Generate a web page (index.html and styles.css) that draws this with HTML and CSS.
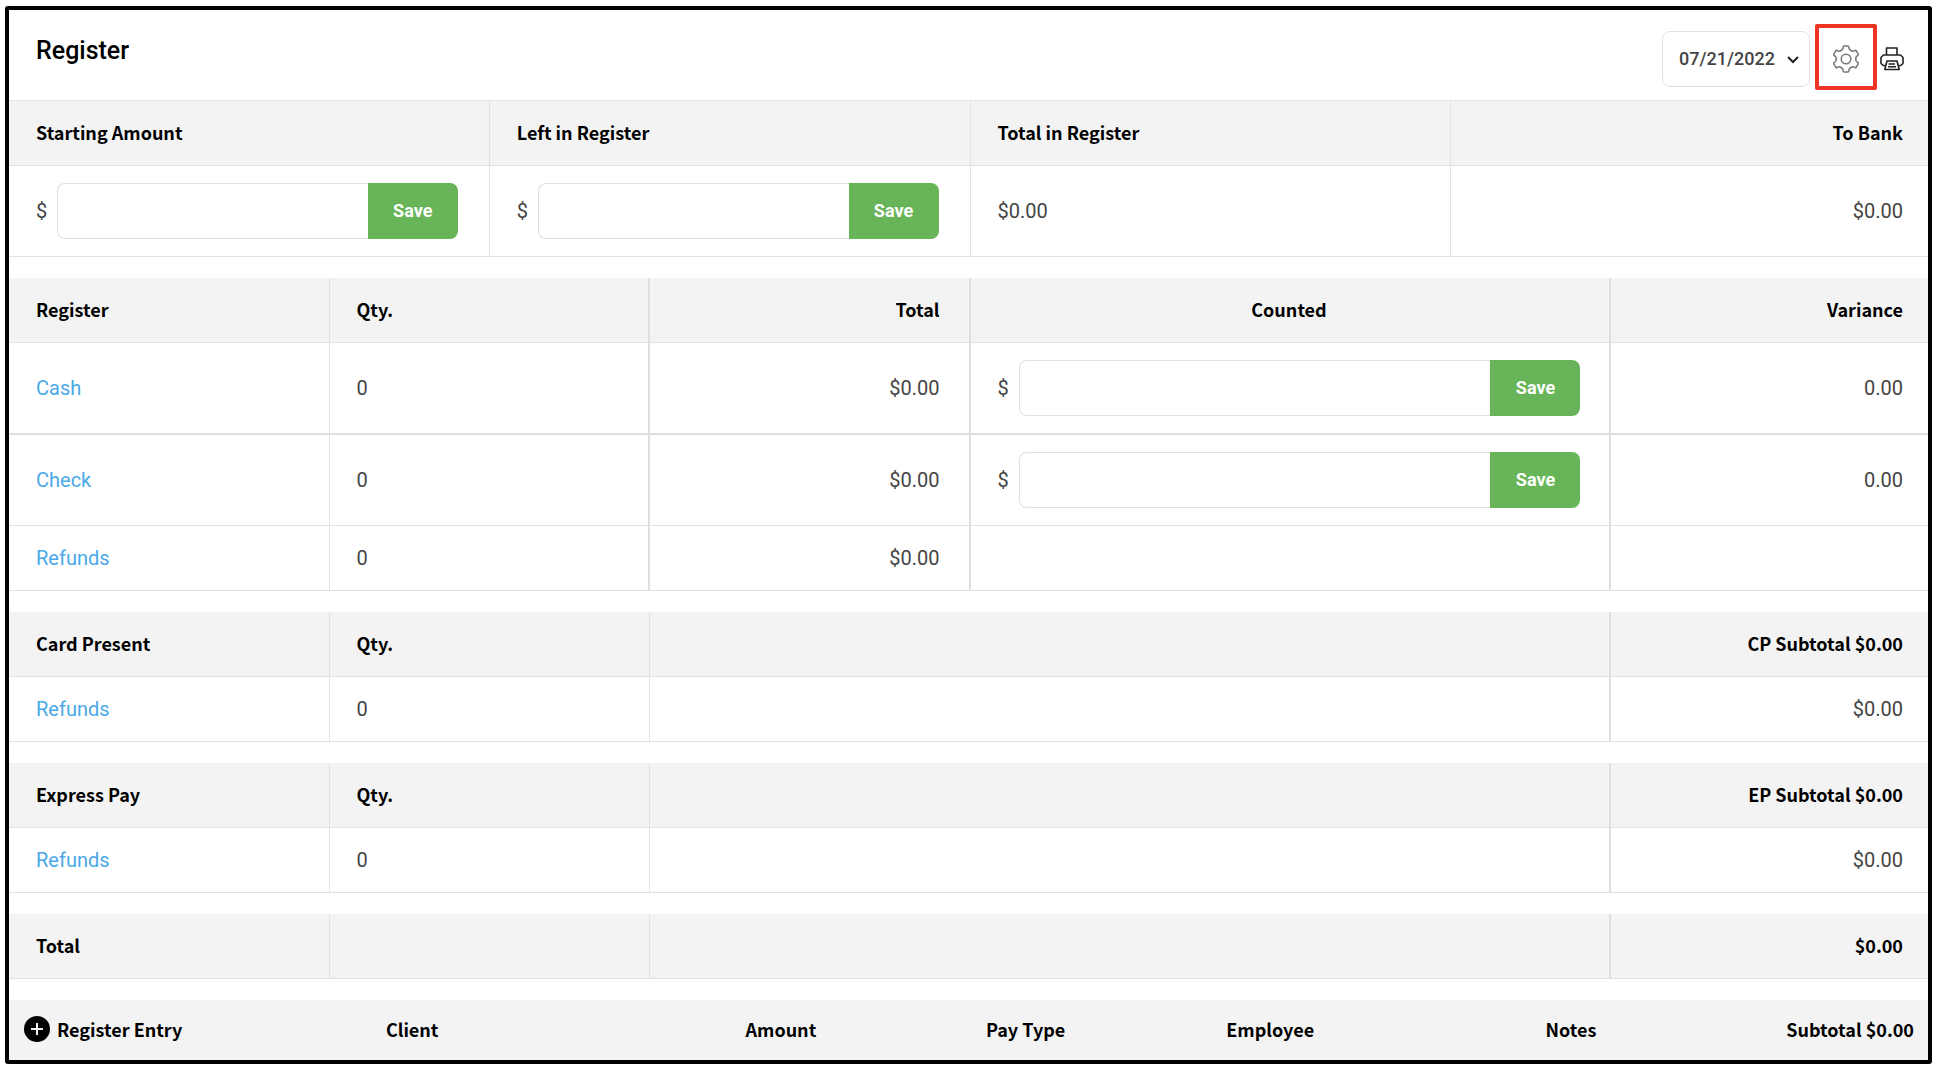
FILE: index.html
```
<!DOCTYPE html>
<html lang="en">
<head>
    <meta charset="UTF-8">
    <meta name="viewport" content="width=device-width, initial-scale=1.0">
    <title>Register</title>
    <link rel="stylesheet" href="styles.css">
</head>
<body>
    <main class="register">
        <header class="page-header">
            <h1>Register</h1>
            <div class="tools">
                <div class="date-picker">
                    <select aria-label="Date">
                        <option>07/21/2022</option>
                    </select>
                    <svg class="chevron" viewBox="0 0 12 8" fill="none" stroke="currentColor" stroke-width="2">
                        <path d="M1 1l5 5 5-5"></path>
                    </svg>
                </div>
                <button type="button" class="settings-btn" aria-label="Settings">
                    <svg viewBox="0 0 28 28" fill="none" stroke="currentColor" stroke-width="1.5" stroke-linecap="round">
                        <path id="tooth" d="M9.1 5.500Q10.800 4.900 11 3.200L11.100 2Q11.200 1 12.200 1H15.800Q16.800 1 16.900 2L17 3.200Q17.200 4.900 18.900 5.500"></path>
                        <use href="#tooth" transform="rotate(60 14 14)"></use>
                        <use href="#tooth" transform="rotate(120 14 14)"></use>
                        <use href="#tooth" transform="rotate(180 14 14)"></use>
                        <use href="#tooth" transform="rotate(240 14 14)"></use>
                        <use href="#tooth" transform="rotate(300 14 14)"></use>
                        <circle cx="14" cy="14" r="4.8"></circle>
                    </svg>
                </button>
                <button type="button" class="print-btn" aria-label="Print">
                    <svg viewBox="0 0 24 24" fill="none" stroke="currentColor" stroke-width="1.6" stroke-linejoin="round">
                        <path d="M6.500 8V1h10.500v7"></path>
                        <path d="M5 18.500H3.200L1 16.500V10.500L3.500 8h17L23 10.500v6l-2.200 2H19"></path>
                        <path d="M7 14h10l2.200 8.500H4.800z"></path>
                        <path d="M8.500 17h6.500M8 19.700h8"></path>
                    </svg>
                </button>
            </div>
        </header>

        <table>
            <thead>
                <tr>
                    <th>Starting Amount</th>
                    <th>Left in Register</th>
                    <th>Total in Register</th>
                    <th class="right">To Bank</th>
                </tr>
            </thead>
            <tbody>
                <tr class="tall">
                    <td class="entry">
                        <form class="amount-form">
                            <label for="starting-amount">$</label>
                            <input type="text" id="starting-amount">
                            <button type="button">Save</button>
                        </form>
                    </td>
                    <td class="entry">
                        <form class="amount-form">
                            <label for="left-amount">$</label>
                            <input type="text" id="left-amount">
                            <button type="button">Save</button>
                        </form>
                    </td>
                    <td>$0.00</td>
                    <td class="right">$0.00</td>
                </tr>
            </tbody>
        </table>

        <table>
            <colgroup>
                <col class="sixth"><col class="sixth"><col class="sixth"><col class="third"><col class="sixth">
            </colgroup>
            <thead>
                <tr>
                    <th>Register</th>
                    <th class="divider">Qty.</th>
                    <th class="right divider">Total</th>
                    <th class="center divider">Counted</th>
                    <th class="right">Variance</th>
                </tr>
            </thead>
            <tbody>
                <tr class="tall strong-line">
                    <td><a href="#cash">Cash</a></td>
                    <td class="divider">0</td>
                    <td class="right divider">$0.00</td>
                    <td class="divider">
                        <form class="amount-form">
                            <label for="cash-counted">$</label>
                            <input type="text" id="cash-counted">
                            <button type="button">Save</button>
                        </form>
                    </td>
                    <td class="right">0.00</td>
                </tr>
                <tr class="tall">
                    <td><a href="#check">Check</a></td>
                    <td class="divider">0</td>
                    <td class="right divider">$0.00</td>
                    <td class="divider">
                        <form class="amount-form">
                            <label for="check-counted">$</label>
                            <input type="text" id="check-counted">
                            <button type="button">Save</button>
                        </form>
                    </td>
                    <td class="right">0.00</td>
                </tr>
                <tr>
                    <td><a href="#refunds">Refunds</a></td>
                    <td class="divider">0</td>
                    <td class="right divider">$0.00</td>
                    <td class="divider"></td>
                    <td></td>
                </tr>
            </tbody>
        </table>

        <table>
            <colgroup>
                <col class="sixth"><col class="sixth"><col class="half"><col class="sixth">
            </colgroup>
            <thead>
                <tr>
                    <th>Card Present</th>
                    <th>Qty.</th>
                    <th class="divider"></th>
                    <th class="right">CP Subtotal $0.00</th>
                </tr>
            </thead>
            <tbody>
                <tr>
                    <td><a href="#card-refunds">Refunds</a></td>
                    <td>0</td>
                    <td class="divider"></td>
                    <td class="right">$0.00</td>
                </tr>
            </tbody>
        </table>

        <table>
            <colgroup>
                <col class="sixth"><col class="sixth"><col class="half"><col class="sixth">
            </colgroup>
            <thead>
                <tr>
                    <th>Express Pay</th>
                    <th>Qty.</th>
                    <th class="divider"></th>
                    <th class="right">EP Subtotal $0.00</th>
                </tr>
            </thead>
            <tbody>
                <tr>
                    <td><a href="#express-refunds">Refunds</a></td>
                    <td>0</td>
                    <td class="divider"></td>
                    <td class="right">$0.00</td>
                </tr>
            </tbody>
        </table>

        <table>
            <colgroup>
                <col class="sixth"><col class="sixth"><col class="half"><col class="sixth">
            </colgroup>
            <tbody>
                <tr>
                    <th scope="row">Total</th>
                    <th></th>
                    <th class="divider"></th>
                    <th class="right">$0.00</th>
                </tr>
            </tbody>
        </table>

        <table class="entries">
            <colgroup>
                <col class="entry-name"><col class="entry-client"><col class="entry-amount"><col class="entry-type"><col class="entry-employee"><col class="entry-notes"><col>
            </colgroup>
            <thead>
                <tr>
                    <th>
                        <button type="button" class="add-entry">
                            <svg viewBox="0 0 26 26">
                                <circle cx="13" cy="13" r="13"></circle>
                                <path d="M13 7v12M7 13h12" stroke="#f3f3f3" stroke-width="2"></path>
                            </svg>
                            Register Entry
                        </button>
                    </th>
                    <th>Client</th>
                    <th>Amount</th>
                    <th>Pay Type</th>
                    <th>Employee</th>
                    <th>Notes</th>
                    <th class="right">Subtotal $0.00</th>
                </tr>
            </thead>
        </table>
    </main>
</body>
</html>
```
FILE: styles.css
```
* {
    margin: 0;
    padding: 0;
    box-sizing: border-box;
}

body {
    font-family: Roboto, 'Liberation Sans', sans-serif;
    font-size: 20px;
    line-height: 24px;
    color: #444;
    background: white;
}

button,
input,
select {
    font: inherit;
}

.register {
    margin: 6px 8px 8px 5px;
    border: 4px solid black;
    border-radius: 3px;
    overflow: hidden;
}

/* Header */
.page-header {
    display: flex;
    justify-content: space-between;
    align-items: flex-start;
    padding: 14px 24px 10px 27px;
    border-bottom: 1px solid #e4e4e4;
}

h1 {
    padding-top: 15px;
    font-size: 25px;
    font-weight: 500;
    color: black;
}

.tools {
    display: flex;
    align-items: center;
}

.date-picker {
    position: relative;
    margin-right: 5px;
    padding-top: 4px;
}

.date-picker select {
    appearance: none;
    display: block;
    width: 148px;
    height: 56px;
    padding: 0 16px;
    border: 1px solid #e0e0e0;
    border-radius: 8px;
    background: white;
    color: #444;
    font-size: 18px;
    font-weight: 500;
}

.chevron {
    position: absolute;
    top: 29px;
    right: 11px;
    width: 12px;
    height: 8px;
    color: #222;
    pointer-events: none;
}

.settings-btn {
    display: flex;
    align-items: center;
    justify-content: center;
    width: 62px;
    height: 66px;
    margin-right: 3px;
    padding-top: 4px;
    border: 4px solid #ee3524;
    border-radius: 2px;
    background: none;
    color: #777;
    cursor: pointer;
}

.settings-btn svg {
    width: 28px;
    height: 28px;
}

.print-btn {
    display: flex;
    padding-top: 4px;
    border: none;
    background: none;
    color: #222;
    cursor: pointer;
}

.print-btn svg {
    width: 24px;
    height: 24px;
}

/* Tables run under the right edge of the frame */
table {
    width: calc(100% + 4px);
    margin-bottom: 21px;
    table-layout: fixed;
    border-collapse: separate;
    border-spacing: 0;
}

.sixth {
    width: 16.6667%;
}

.third {
    width: 33.3333%;
}

.half {
    width: 50%;
}

th,
td {
    height: 65px;
    padding: 0 29px 0 27px;
    border-right: 1px solid #e2e2e2;
    border-bottom: 1px solid #e2e2e2;
    text-align: left;
    vertical-align: middle;
}

th {
    padding-bottom: 3px;
    background: #f3f3f3;
    color: black;
    font-family: 'Noto Sans CJK SC', sans-serif;
    font-size: 18px;
    font-weight: 700;
}

th:last-child,
td:last-child {
    border-right: none;
}

.divider {
    border-right: 2px solid #dedede;
}

.right {
    text-align: right;
}

.center {
    text-align: center;
}

.tall td {
    height: 91px;
}

.strong-line td {
    height: 92px;
    border-bottom: 2px solid #dedede;
}

td.entry {
    padding-right: 31px;
}

a {
    color: #4aa8e8;
    text-decoration: none;
}

/* Amount fields */
.amount-form {
    display: flex;
    align-items: center;
}

.amount-form label {
    margin-right: 10px;
}

.amount-form input {
    flex: 1;
    min-width: 0;
    height: 56px;
    padding: 0 12px;
    border: 1px solid #e0e0e0;
    border-right: none;
    border-radius: 8px 0 0 8px;
}

.amount-form button {
    width: 90px;
    height: 56px;
    border: none;
    border-radius: 0 8px 8px 0;
    background: #67b558;
    color: white;
    font-size: 18px;
    font-weight: 700;
    cursor: pointer;
}

/* Register entries */
.entries {
    margin-bottom: 0;
}

.entries th {
    height: 60px;
    padding: 0 0 2px;
    border: none;
}

.entries th:first-child {
    padding-left: 15px;
}

.entries th.right {
    padding-right: 18px;
}

.entry-name {
    width: 19.6%;
}

.entry-client {
    width: 18.7%;
}

.entry-amount,
.entry-type {
    width: 12.5%;
}

.entry-employee {
    width: 16.6%;
}

.entry-notes {
    width: 8%;
}

.add-entry {
    display: flex;
    align-items: center;
    gap: 7px;
    border: none;
    background: none;
    color: black;
    cursor: pointer;
}

.add-entry svg {
    width: 26px;
    height: 26px;
}
```
